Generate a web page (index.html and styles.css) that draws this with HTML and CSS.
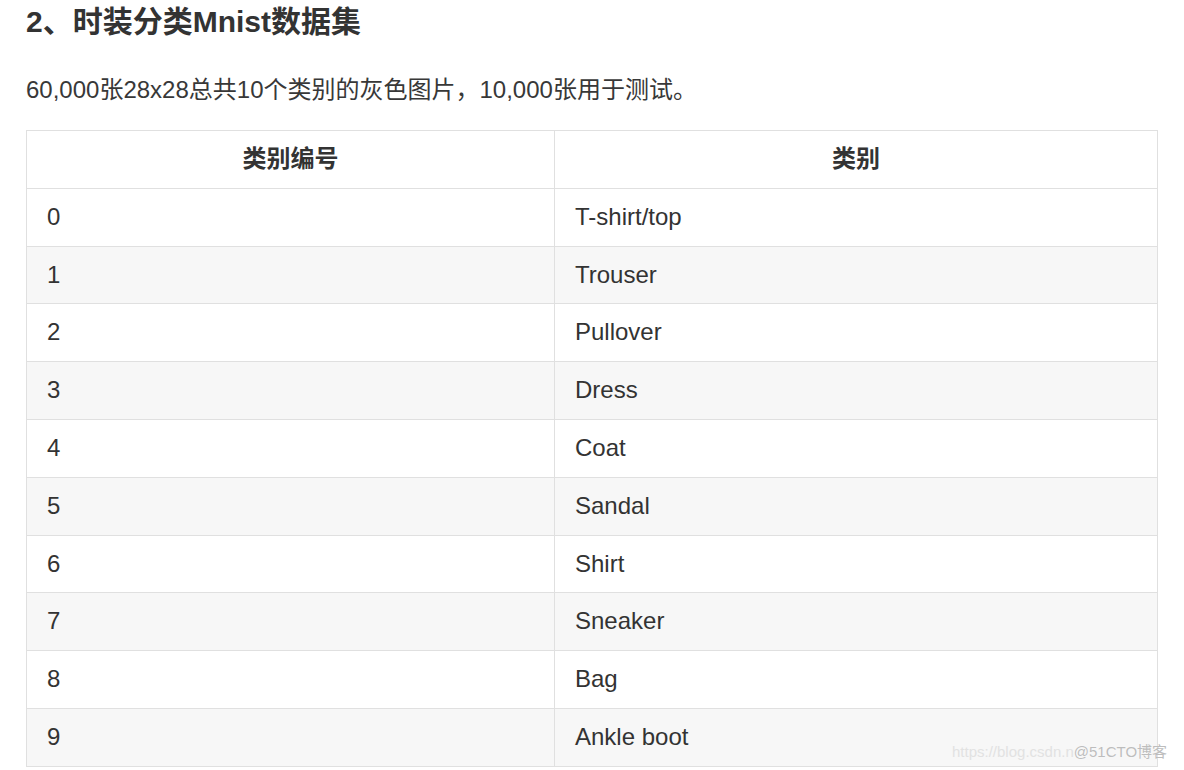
FILE: index.html
```html
<!DOCTYPE html>
<html lang="zh-CN">
<head>
<meta charset="utf-8">
<title>时装分类Mnist数据集</title>
<link rel="stylesheet" href="styles.css">
</head>
<body>
<div class="article">
  <h2 class="title">2、时装分类Mnist数据集</h2>
  <p class="desc">60,000张28x28总共10个类别的灰色图片，10,000张用于测试。</p>
  <table class="data">
    <thead>
      <tr><th class="c1">类别编号</th><th>类别</th></tr>
    </thead>
    <tbody>
      <tr><td>0</td><td>T-shirt/top</td></tr>
      <tr><td>1</td><td>Trouser</td></tr>
      <tr><td>2</td><td>Pullover</td></tr>
      <tr><td>3</td><td>Dress</td></tr>
      <tr><td>4</td><td>Coat</td></tr>
      <tr><td>5</td><td>Sandal</td></tr>
      <tr><td>6</td><td>Shirt</td></tr>
      <tr><td>7</td><td>Sneaker</td></tr>
      <tr><td>8</td><td>Bag</td></tr>
      <tr><td>9</td><td>Ankle boot</td></tr>
    </tbody>
  </table>
</div>
<div class="watermark"><span class="wm-url">https://blog.csdn.n</span><span class="wm-brand">@51CTO博客</span></div>
</body>
</html>
```
FILE: styles.css
```css
html, body {
  margin: 0;
  padding: 0;
  background: #ffffff;
}
body {
  font-family: "Liberation Sans", "Noto Sans CJK SC", sans-serif;
  color: #333333;
  width: 1184px;
  height: 770px;
  overflow: hidden;
  position: relative;
}
.article {
  padding: 0 26px;
}
.title {
  margin: 0;
  padding-top: 2px;
  font-size: 30px;
  line-height: 40px;
  font-weight: bold;
  color: #333333;
}
.desc {
  margin: 0;
  padding-top: 30px;
  font-size: 24px;
  line-height: 36px;
  color: #383838;
}
.data {
  margin-top: 22px;
  width: 1132px;
  border-collapse: collapse;
  font-size: 24px;
  color: #333333;
}
.data th, .data td {
  border: 1px solid #e0e0e0;
  padding: 10px 20px 10px 20px;
  line-height: 36.8px;
  text-align: left;
}
.data th {
  font-weight: bold;
  text-align: center;
  background: #ffffff;
}
.data th.c1 {
  width: 487px;
}
.data tbody tr:nth-child(even) td {
  background: #f7f7f7;
}
.data tbody tr:nth-child(odd) td {
  background: #ffffff;
}
.watermark {
  position: absolute;
  left: 952px;
  top: 742px;
  font-size: 15px;
  line-height: 20px;
  white-space: nowrap;
}
.wm-url {
  color: #e2e2e2;
}
.wm-brand {
  color: #bdbdbd;
  text-shadow: 0 0 1px #ffffff;
}
```
